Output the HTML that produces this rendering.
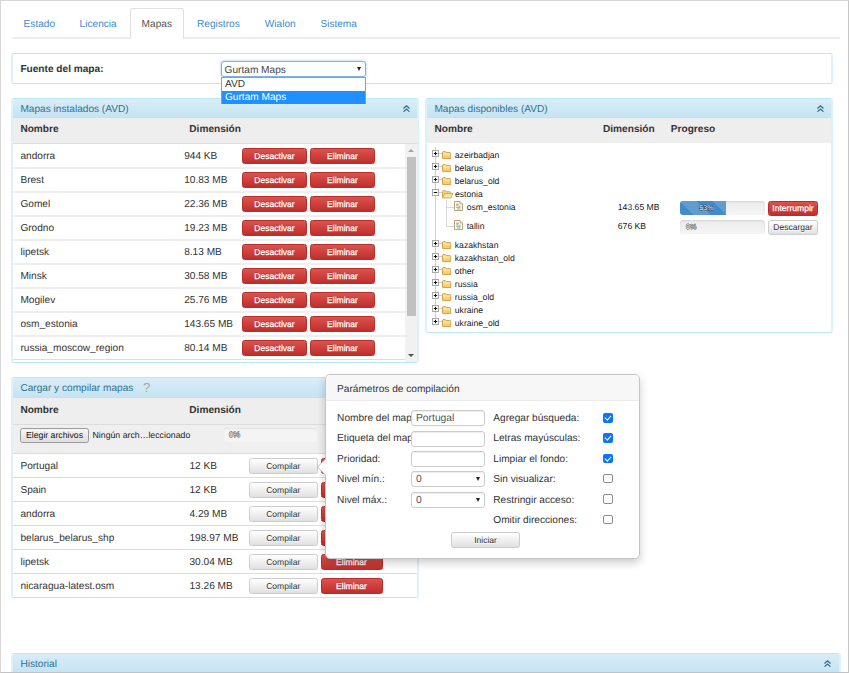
<!DOCTYPE html>
<html lang="es">
<head>
<meta charset="utf-8">
<title>Mapas</title>
<style>
*{box-sizing:border-box;}
html,body{margin:0;padding:0;}
body{width:849px;height:673px;overflow:hidden;background:#fff;position:relative;font-family:"Liberation Sans",Arial,sans-serif;font-size:10.12px;color:#333;line-height:1.2;text-rendering:geometricPrecision;}
.abs{position:absolute;}
#frame{position:absolute;left:0;top:0;width:849px;height:673px;border:1px solid #d6d6d6;border-right-color:#c6c6c6;border-bottom-color:#c2c2c2;z-index:50;pointer-events:none;}
/* tabs */
#tabline{position:absolute;left:12px;top:37px;width:828px;height:2px;background:#eee;}
.tab{position:absolute;top:10px;height:30px;line-height:30px;color:#428bca;white-space:nowrap;}
#tabact{position:absolute;left:130px;top:8px;width:54px;height:31px;border:1px solid #e0e0e0;border-bottom:1px solid #fff;border-radius:3px 3px 0 0;background:#fff;}
/* source box */
#src{position:absolute;left:11px;top:53px;width:822px;height:31px;border:1px solid #bce8f1;border-left:2px solid #dcf2f8;border-right:2px solid #dcf2f8;border-radius:3px;background:#fff;}
#src b{position:absolute;left:7.4px;top:0.5px;line-height:29px;}
#sel{position:absolute;left:221px;top:61px;width:145px;height:16px;border:1px solid #7ab5e6;border-radius:3px;background:#fff;box-shadow:0 0 3px rgba(102,175,233,.7);line-height:17px;padding-left:2.6px;color:#444;overflow:hidden;}
.arr{position:absolute;width:0;height:0;border-left:2.6px solid transparent;border-right:2.6px solid transparent;border-top:4.2px solid #222;}
#dd{position:absolute;left:221px;top:77px;width:145px;height:27px;border:1px solid #8c9fb8;background:#fff;z-index:20;}
#dd div{height:13px;line-height:13px;padding-left:3px;color:#333;}
#dd div.hl{background:#1e90ff;color:#fff;}
/* panels */
.panel{position:absolute;border:1px solid #bce8f1;border-left:2px solid #dcf2f8;border-right:2px solid #dcf2f8;border-radius:3px;background:#fff;overflow:hidden;}
.ph{position:absolute;left:0;top:0;right:0;height:19px;background:linear-gradient(#d9edf7,#c6e4f3);color:#31708f;line-height:21.4px;padding-left:7.4px;}
.th{position:absolute;left:0;right:0;top:19px;height:25px;background:#eee;font-weight:bold;}
.th span{position:absolute;top:0;line-height:24px;}
.row{position:absolute;left:0;right:0;height:24px;border-top:1px solid #ddd;line-height:25px;}
.row span{position:absolute;top:0;white-space:nowrap;}
.btn{position:absolute;height:16px;line-height:14px;text-align:center;font-size:8.55px;border-radius:2.5px;border:1px solid #ccc;white-space:nowrap;}
.red{background:linear-gradient(#d9534f,#c12e2a);border-color:#b92c28;color:#fff;text-shadow:0 -1px 0 rgba(0,0,0,.2);-webkit-text-stroke:0.25px #fff;}
.def{background:linear-gradient(#fff,#e0e0e0);border-color:#ccc;color:#333;text-shadow:0 1px 0 #fff;}
.chev{position:absolute;}
.prog{position:absolute;height:14px;background:linear-gradient(#ebebeb,#f5f5f5);border-radius:3px;box-shadow:inset 0 1px 2px rgba(0,0,0,.1);overflow:hidden;}
.pt{position:absolute;font-size:7.1px;color:#fff;-webkit-text-stroke:0.9px rgba(40,40,40,.85);paint-order:stroke fill;line-height:14px;}
.fill{position:absolute;left:0;top:0;height:100%;background-color:#428bca;background-image:linear-gradient(45deg,rgba(255,255,255,.15) 25%,transparent 25%,transparent 50%,rgba(255,255,255,.15) 50%,rgba(255,255,255,.15) 75%,transparent 75%,transparent);background-size:33px 33px;}
/* tree */
.tree{font-size:8.65px;color:#222;}
.tree span{position:absolute;white-space:nowrap;line-height:12px;}
/* popover */
#pop{position:absolute;left:325px;top:374px;width:314.5px;height:185px;background:#fff;border:1px solid #c4c4c4;border-radius:5px;box-shadow:0 4px 8px rgba(0,0,0,.2);z-index:30;}
#pop .pt2{position:absolute;left:0;top:0;right:0;height:26px;background:#f7f7f7;border-bottom:1px solid #ebebeb;border-radius:4px 4px 0 0;line-height:29px;padding-left:11.1px;}
#pop .lb{position:absolute;white-space:nowrap;overflow:hidden;line-height:16px;height:16px;}
#pop .in{position:absolute;left:85px;width:74px;height:16px;border:1px solid #ccc;border-radius:3px;background:#fff;font-size:10.3px;line-height:14px;padding-left:4px;padding-top:1.4px;color:#555;box-shadow:inset 0 1px 1px rgba(0,0,0,.075);}
.cb{position:absolute;left:277px;width:9.6px;height:9.6px;border-radius:2px;}
.cb.on{background:#0b74fb;}
.cb.off{border:1px solid #8c8c8c;background:#fff;}

#sb{position:absolute;right:0;top:45px;width:11.8px;height:218px;background:#f1f1f1;}
#sb .thumb{position:absolute;left:1.7px;top:12.9px;width:8.9px;height:159.2px;background:#c1c1c1;}
#sb .up{position:absolute;left:3.1px;top:5px;width:0;height:0;border-left:3px solid transparent;border-right:3px solid transparent;border-bottom:3.4px solid #a3a3a3;}
#sb .dn{position:absolute;left:3.1px;top:209.8px;width:0;height:0;border-left:3px solid transparent;border-right:3px solid transparent;border-top:3.4px solid #505050;}
#filerow{position:absolute;left:0;right:0;top:46px;height:29px;background:#efefef;border-top:1px solid #ddd;}
#fbtn{position:absolute;left:7px;top:3px;width:69px;height:15px;border:1px solid #9a9a9a;border-radius:2.5px;background:linear-gradient(#f6f6f6,#dedede);color:#111;text-align:center;line-height:13.4px;font-size:8.7px;}
#ftxt{position:absolute;left:79.5px;top:3px;line-height:15.4px;font-size:8.75px;color:#222;white-space:nowrap;}
#parrow{position:absolute;left:-8.5px;top:83.5px;width:0;height:0;border-top:8.5px solid transparent;border-bottom:8.5px solid transparent;border-right:8.5px solid #fff;filter:drop-shadow(-1px 0 0 #bbb);}
.cb.on::after{content:"";position:absolute;left:2.9px;top:0.9px;width:2.5px;height:5px;border:solid #fff;border-width:0 1.7px 1.7px 0;transform:rotate(42deg);}

#p3 .ph{height:20px;line-height:22px;}
#p3 .th{top:20px;height:26px;}
#p3 .th span{line-height:26px;}
.ph{border-bottom:1px solid #bfe3f1;}

.r2{border-top:2px solid #eee;}
.r2 span{top:-1px;}
.r2 .btn{margin-top:-1px;}
</style>
</head>
<body>
<!-- tabs -->
<div id="tabline"></div>
<div id="tabact"></div>
<div class="tab" style="left:23.6px">Estado</div>
<div class="tab" style="left:79.6px">Licencia</div>
<div class="tab" style="left:141.6px;color:#555">Mapas</div>
<div class="tab" style="left:197px">Registros</div>
<div class="tab" style="left:264.8px">Wialon</div>
<div class="tab" style="left:320.4px">Sistema</div>

<!-- source -->
<div id="src"><b>Fuente del mapa:</b></div>
<div id="sel">Gurtam Maps<i class="arr" style="right:4.1px;top:4.6px;border-left-width:2.5px;border-right-width:2.5px;border-top-width:4.2px"></i></div>
<div id="dd"><div>AVD</div><div class="hl">Gurtam Maps</div></div>

<!-- panel 1 -->
<div class="panel" id="p1" style="left:11px;top:98px;width:408px;height:265px;">
 <div class="ph">Mapas instalados (AVD)<svg class="chev" style="right:7.3px;top:5.7px" width="7" height="7" viewBox="0 0 7 7"><path d="M0.5 3.5 L3.5 0.9 L6.5 3.5 M0.5 6.6 L3.5 4 L6.5 6.6" fill="none" stroke="#2f6d8c" stroke-width="1.25"/></svg></div>
 <div class="th"><span style="left:7.4px">Nombre</span><span style="left:176.3px">Dimensión</span></div>
<div class="row first" style="top:44px"><span style="left:7.4px">andorra</span><span style="left:171.2px">944 KB</span><div class="btn red" style="left:229px;top:4px;width:65px">Desactivar</div><div class="btn red" style="left:297px;top:4px;width:65px">Eliminar</div></div>
<div class="row r2" style="top:68px"><span style="left:7.4px">Brest</span><span style="left:171.2px">10.83 MB</span><div class="btn red" style="left:229px;top:4px;width:65px">Desactivar</div><div class="btn red" style="left:297px;top:4px;width:65px">Eliminar</div></div>
<div class="row r2" style="top:92px"><span style="left:7.4px">Gomel</span><span style="left:171.2px">22.36 MB</span><div class="btn red" style="left:229px;top:4px;width:65px">Desactivar</div><div class="btn red" style="left:297px;top:4px;width:65px">Eliminar</div></div>
<div class="row r2" style="top:116px"><span style="left:7.4px">Grodno</span><span style="left:171.2px">19.23 MB</span><div class="btn red" style="left:229px;top:4px;width:65px">Desactivar</div><div class="btn red" style="left:297px;top:4px;width:65px">Eliminar</div></div>
<div class="row r2" style="top:140px"><span style="left:7.4px">lipetsk</span><span style="left:171.2px">8.13 MB</span><div class="btn red" style="left:229px;top:4px;width:65px">Desactivar</div><div class="btn red" style="left:297px;top:4px;width:65px">Eliminar</div></div>
<div class="row r2" style="top:164px"><span style="left:7.4px">Minsk</span><span style="left:171.2px">30.58 MB</span><div class="btn red" style="left:229px;top:4px;width:65px">Desactivar</div><div class="btn red" style="left:297px;top:4px;width:65px">Eliminar</div></div>
<div class="row r2" style="top:188px"><span style="left:7.4px">Mogilev</span><span style="left:171.2px">25.76 MB</span><div class="btn red" style="left:229px;top:4px;width:65px">Desactivar</div><div class="btn red" style="left:297px;top:4px;width:65px">Eliminar</div></div>
<div class="row r2" style="top:212px"><span style="left:7.4px">osm_estonia</span><span style="left:171.2px">143.65 MB</span><div class="btn red" style="left:229px;top:4px;width:65px">Desactivar</div><div class="btn red" style="left:297px;top:4px;width:65px">Eliminar</div></div>
<div class="row r2" style="top:236px"><span style="left:7.4px">russia_moscow_region</span><span style="left:171.2px">80.14 MB</span><div class="btn red" style="left:229px;top:4px;width:65px">Desactivar</div><div class="btn red" style="left:297px;top:4px;width:65px">Eliminar</div></div>

 <div class="abs" style="left:0;right:0;top:260px;height:1px;background:#ddd"></div>
 <div id="sb"><i class="up"></i><i class="thumb"></i><i class="dn"></i></div>
</div>

<!-- panel 2 -->
<div class="panel" id="p2" style="left:425px;top:98px;width:408px;height:235px;">
 <div class="ph">Mapas disponibles (AVD)<svg class="chev" style="right:7px;top:5.7px" width="7" height="7" viewBox="0 0 7 7"><path d="M0.5 3.5 L3.5 0.9 L6.5 3.5 M0.5 6.6 L3.5 4 L6.5 6.6" fill="none" stroke="#2f6d8c" stroke-width="1.25"/></svg></div>
 <div class="th"><span style="left:7.5px">Nombre</span><span style="left:176px">Dimensión</span><span style="left:243.8px">Progreso</span></div>
 <div class="tree"><svg width="0" height="0" style="position:absolute"><defs><linearGradient id="fg" x1="0" y1="0" x2="0" y2="1"><stop offset="0" stop-color="#fde79e"/><stop offset="1" stop-color="#f4c55e"/></linearGradient></defs></svg><div class="abs" style="left:8px;top:48px;width:1px;height:175px;background:#d0d0d0"></div><div class="abs" style="left:11px;top:54.1px;width:4px;height:1px;background:#d0d0d0"></div><svg class="abs" style="left:5px;top:51.1px" width="7" height="7" viewBox="0 0 7 7"><rect x="0.5" y="0.5" width="6" height="6" fill="#fff" stroke="#a0a0a0" stroke-width="0.9"/><path d="M1.8 3.5h3.4M3.5 1.8v3.4" stroke="#111" stroke-width="1" fill="none"/></svg><svg class="abs" style="left:14.5px;top:51.6px" width="9.3" height="8.2" viewBox="0 0 10 8.4" preserveAspectRatio="none"><path d="M0.5 2 Q0.5 0.6 1.6 0.6 L3.6 0.6 L4.5 1.7 L8.6 1.7 Q9.5 1.7 9.5 2.6 L9.5 7 Q9.5 7.9 8.6 7.9 L1.4 7.9 Q0.5 7.9 0.5 7 Z" fill="url(#fg)" stroke="#c98f2f" stroke-width="0.9"/><path d="M1.2 3.1h7.6" stroke="#fdf0bd" stroke-width="0.7"/></svg><span style="left:27.8px;top:49.6px">azeirbadjan</span><div class="abs" style="left:11px;top:67.1px;width:4px;height:1px;background:#d0d0d0"></div><svg class="abs" style="left:5px;top:64.1px" width="7" height="7" viewBox="0 0 7 7"><rect x="0.5" y="0.5" width="6" height="6" fill="#fff" stroke="#a0a0a0" stroke-width="0.9"/><path d="M1.8 3.5h3.4M3.5 1.8v3.4" stroke="#111" stroke-width="1" fill="none"/></svg><svg class="abs" style="left:14.5px;top:64.6px" width="9.3" height="8.2" viewBox="0 0 10 8.4" preserveAspectRatio="none"><path d="M0.5 2 Q0.5 0.6 1.6 0.6 L3.6 0.6 L4.5 1.7 L8.6 1.7 Q9.5 1.7 9.5 2.6 L9.5 7 Q9.5 7.9 8.6 7.9 L1.4 7.9 Q0.5 7.9 0.5 7 Z" fill="url(#fg)" stroke="#c98f2f" stroke-width="0.9"/><path d="M1.2 3.1h7.6" stroke="#fdf0bd" stroke-width="0.7"/></svg><span style="left:27.8px;top:62.6px">belarus</span><div class="abs" style="left:11px;top:80.1px;width:4px;height:1px;background:#d0d0d0"></div><svg class="abs" style="left:5px;top:77.1px" width="7" height="7" viewBox="0 0 7 7"><rect x="0.5" y="0.5" width="6" height="6" fill="#fff" stroke="#a0a0a0" stroke-width="0.9"/><path d="M1.8 3.5h3.4M3.5 1.8v3.4" stroke="#111" stroke-width="1" fill="none"/></svg><svg class="abs" style="left:14.5px;top:77.6px" width="9.3" height="8.2" viewBox="0 0 10 8.4" preserveAspectRatio="none"><path d="M0.5 2 Q0.5 0.6 1.6 0.6 L3.6 0.6 L4.5 1.7 L8.6 1.7 Q9.5 1.7 9.5 2.6 L9.5 7 Q9.5 7.9 8.6 7.9 L1.4 7.9 Q0.5 7.9 0.5 7 Z" fill="url(#fg)" stroke="#c98f2f" stroke-width="0.9"/><path d="M1.2 3.1h7.6" stroke="#fdf0bd" stroke-width="0.7"/></svg><span style="left:27.8px;top:75.6px">belarus_old</span><div class="abs" style="left:11px;top:93.1px;width:4px;height:1px;background:#d0d0d0"></div><svg class="abs" style="left:5px;top:90.1px" width="7" height="7" viewBox="0 0 7 7"><rect x="0.5" y="0.5" width="6" height="6" fill="#fff" stroke="#a0a0a0" stroke-width="0.9"/><path d="M1.8 3.5h3.4" stroke="#111" stroke-width="1" fill="none"/></svg><svg class="abs" style="left:14.6px;top:91.2px" width="11.5" height="8.6" viewBox="0 0 11.5 8.6"><path d="M0.5 7.6 L0.5 1.6 Q0.5 0.6 1.5 0.6 L3.4 0.6 L4.3 1.7 L7.8 1.7 Q8.6 1.7 8.6 2.6 L8.6 3.4" fill="#f6d27a" stroke="#cf9a3a" stroke-width="0.8"/><path d="M0.6 8 L2.6 3.6 L11 3.6 L8.8 8 Z" fill="#fbe6a2" stroke="#cf9a3a" stroke-width="0.8" stroke-linejoin="round"/></svg><span style="left:28px;top:88.6px">estonia</span><div class="abs" style="left:11px;top:144.1px;width:4px;height:1px;background:#d0d0d0"></div><svg class="abs" style="left:5px;top:141.1px" width="7" height="7" viewBox="0 0 7 7"><rect x="0.5" y="0.5" width="6" height="6" fill="#fff" stroke="#a0a0a0" stroke-width="0.9"/><path d="M1.8 3.5h3.4M3.5 1.8v3.4" stroke="#111" stroke-width="1" fill="none"/></svg><svg class="abs" style="left:14.5px;top:141.6px" width="9.3" height="8.2" viewBox="0 0 10 8.4" preserveAspectRatio="none"><path d="M0.5 2 Q0.5 0.6 1.6 0.6 L3.6 0.6 L4.5 1.7 L8.6 1.7 Q9.5 1.7 9.5 2.6 L9.5 7 Q9.5 7.9 8.6 7.9 L1.4 7.9 Q0.5 7.9 0.5 7 Z" fill="url(#fg)" stroke="#c98f2f" stroke-width="0.9"/><path d="M1.2 3.1h7.6" stroke="#fdf0bd" stroke-width="0.7"/></svg><span style="left:27.8px;top:139.6px">kazakhstan</span><div class="abs" style="left:11px;top:157.1px;width:4px;height:1px;background:#d0d0d0"></div><svg class="abs" style="left:5px;top:154.1px" width="7" height="7" viewBox="0 0 7 7"><rect x="0.5" y="0.5" width="6" height="6" fill="#fff" stroke="#a0a0a0" stroke-width="0.9"/><path d="M1.8 3.5h3.4M3.5 1.8v3.4" stroke="#111" stroke-width="1" fill="none"/></svg><svg class="abs" style="left:14.5px;top:154.6px" width="9.3" height="8.2" viewBox="0 0 10 8.4" preserveAspectRatio="none"><path d="M0.5 2 Q0.5 0.6 1.6 0.6 L3.6 0.6 L4.5 1.7 L8.6 1.7 Q9.5 1.7 9.5 2.6 L9.5 7 Q9.5 7.9 8.6 7.9 L1.4 7.9 Q0.5 7.9 0.5 7 Z" fill="url(#fg)" stroke="#c98f2f" stroke-width="0.9"/><path d="M1.2 3.1h7.6" stroke="#fdf0bd" stroke-width="0.7"/></svg><span style="left:27.8px;top:152.6px">kazakhstan_old</span><div class="abs" style="left:11px;top:170.1px;width:4px;height:1px;background:#d0d0d0"></div><svg class="abs" style="left:5px;top:167.1px" width="7" height="7" viewBox="0 0 7 7"><rect x="0.5" y="0.5" width="6" height="6" fill="#fff" stroke="#a0a0a0" stroke-width="0.9"/><path d="M1.8 3.5h3.4M3.5 1.8v3.4" stroke="#111" stroke-width="1" fill="none"/></svg><svg class="abs" style="left:14.5px;top:167.6px" width="9.3" height="8.2" viewBox="0 0 10 8.4" preserveAspectRatio="none"><path d="M0.5 2 Q0.5 0.6 1.6 0.6 L3.6 0.6 L4.5 1.7 L8.6 1.7 Q9.5 1.7 9.5 2.6 L9.5 7 Q9.5 7.9 8.6 7.9 L1.4 7.9 Q0.5 7.9 0.5 7 Z" fill="url(#fg)" stroke="#c98f2f" stroke-width="0.9"/><path d="M1.2 3.1h7.6" stroke="#fdf0bd" stroke-width="0.7"/></svg><span style="left:27.8px;top:165.6px">other</span><div class="abs" style="left:11px;top:183.1px;width:4px;height:1px;background:#d0d0d0"></div><svg class="abs" style="left:5px;top:180.1px" width="7" height="7" viewBox="0 0 7 7"><rect x="0.5" y="0.5" width="6" height="6" fill="#fff" stroke="#a0a0a0" stroke-width="0.9"/><path d="M1.8 3.5h3.4M3.5 1.8v3.4" stroke="#111" stroke-width="1" fill="none"/></svg><svg class="abs" style="left:14.5px;top:180.6px" width="9.3" height="8.2" viewBox="0 0 10 8.4" preserveAspectRatio="none"><path d="M0.5 2 Q0.5 0.6 1.6 0.6 L3.6 0.6 L4.5 1.7 L8.6 1.7 Q9.5 1.7 9.5 2.6 L9.5 7 Q9.5 7.9 8.6 7.9 L1.4 7.9 Q0.5 7.9 0.5 7 Z" fill="url(#fg)" stroke="#c98f2f" stroke-width="0.9"/><path d="M1.2 3.1h7.6" stroke="#fdf0bd" stroke-width="0.7"/></svg><span style="left:27.8px;top:178.6px">russia</span><div class="abs" style="left:11px;top:196.1px;width:4px;height:1px;background:#d0d0d0"></div><svg class="abs" style="left:5px;top:193.1px" width="7" height="7" viewBox="0 0 7 7"><rect x="0.5" y="0.5" width="6" height="6" fill="#fff" stroke="#a0a0a0" stroke-width="0.9"/><path d="M1.8 3.5h3.4M3.5 1.8v3.4" stroke="#111" stroke-width="1" fill="none"/></svg><svg class="abs" style="left:14.5px;top:193.6px" width="9.3" height="8.2" viewBox="0 0 10 8.4" preserveAspectRatio="none"><path d="M0.5 2 Q0.5 0.6 1.6 0.6 L3.6 0.6 L4.5 1.7 L8.6 1.7 Q9.5 1.7 9.5 2.6 L9.5 7 Q9.5 7.9 8.6 7.9 L1.4 7.9 Q0.5 7.9 0.5 7 Z" fill="url(#fg)" stroke="#c98f2f" stroke-width="0.9"/><path d="M1.2 3.1h7.6" stroke="#fdf0bd" stroke-width="0.7"/></svg><span style="left:27.8px;top:191.6px">russia_old</span><div class="abs" style="left:11px;top:209.1px;width:4px;height:1px;background:#d0d0d0"></div><svg class="abs" style="left:5px;top:206.1px" width="7" height="7" viewBox="0 0 7 7"><rect x="0.5" y="0.5" width="6" height="6" fill="#fff" stroke="#a0a0a0" stroke-width="0.9"/><path d="M1.8 3.5h3.4M3.5 1.8v3.4" stroke="#111" stroke-width="1" fill="none"/></svg><svg class="abs" style="left:14.5px;top:206.6px" width="9.3" height="8.2" viewBox="0 0 10 8.4" preserveAspectRatio="none"><path d="M0.5 2 Q0.5 0.6 1.6 0.6 L3.6 0.6 L4.5 1.7 L8.6 1.7 Q9.5 1.7 9.5 2.6 L9.5 7 Q9.5 7.9 8.6 7.9 L1.4 7.9 Q0.5 7.9 0.5 7 Z" fill="url(#fg)" stroke="#c98f2f" stroke-width="0.9"/><path d="M1.2 3.1h7.6" stroke="#fdf0bd" stroke-width="0.7"/></svg><span style="left:27.8px;top:204.6px">ukraine</span><div class="abs" style="left:11px;top:222.1px;width:4px;height:1px;background:#d0d0d0"></div><svg class="abs" style="left:5px;top:219.1px" width="7" height="7" viewBox="0 0 7 7"><rect x="0.5" y="0.5" width="6" height="6" fill="#fff" stroke="#a0a0a0" stroke-width="0.9"/><path d="M1.8 3.5h3.4M3.5 1.8v3.4" stroke="#111" stroke-width="1" fill="none"/></svg><svg class="abs" style="left:14.5px;top:219.6px" width="9.3" height="8.2" viewBox="0 0 10 8.4" preserveAspectRatio="none"><path d="M0.5 2 Q0.5 0.6 1.6 0.6 L3.6 0.6 L4.5 1.7 L8.6 1.7 Q9.5 1.7 9.5 2.6 L9.5 7 Q9.5 7.9 8.6 7.9 L1.4 7.9 Q0.5 7.9 0.5 7 Z" fill="url(#fg)" stroke="#c98f2f" stroke-width="0.9"/><path d="M1.2 3.1h7.6" stroke="#fdf0bd" stroke-width="0.7"/></svg><span style="left:27.8px;top:217.6px">ukraine_old</span><div class="abs" style="left:19px;top:101px;width:1px;height:27px;background:#d9d9d9"></div><div class="abs" style="left:19px;top:107.5px;width:8px;height:1px;background:#d9d9d9"></div><svg class="abs" style="left:27.2px;top:102.2px" width="9" height="10" viewBox="0 0 9 10"><path d="M0.5 0.5 L6 0.5 L8.5 3 L8.5 9.5 L0.5 9.5 Z" fill="#fffef6" stroke="#a89d6a" stroke-width="0.9"/><path d="M6 0.5 L6 3 L8.5 3" fill="#efeedc" stroke="#a89d6a" stroke-width="0.7"/><path d="M2.2 3.2h2.6M2.2 4.8h1.6" stroke="#d95f5f" stroke-width="0.9"/><path d="M4.2 5.2h2.4M2.2 6.6h4.4M3 8h3.4" stroke="#6aa58c" stroke-width="0.8"/></svg><span style="left:39.7px;top:101.5px">osm_estonia</span><span style="left:190.8px;top:101.5px">143.65 MB</span><div class="abs" style="left:19px;top:126.5px;width:8px;height:1px;background:#d9d9d9"></div><svg class="abs" style="left:27.2px;top:121.2px" width="9" height="10" viewBox="0 0 9 10"><path d="M0.5 0.5 L6 0.5 L8.5 3 L8.5 9.5 L0.5 9.5 Z" fill="#fffef6" stroke="#a89d6a" stroke-width="0.9"/><path d="M6 0.5 L6 3 L8.5 3" fill="#efeedc" stroke="#a89d6a" stroke-width="0.7"/><path d="M2.2 3.2h2.6M2.2 4.8h1.6" stroke="#d95f5f" stroke-width="0.9"/><path d="M4.2 5.2h2.4M2.2 6.6h4.4M3 8h3.4" stroke="#6aa58c" stroke-width="0.8"/></svg><span style="left:39.7px;top:120.5px">tallin</span><span style="left:190.8px;top:120.5px">676 KB</span></div>
 <div class="prog" style="left:253px;top:102.3px;width:85px"><div class="fill" style="width:45.7px"></div><span class="pt" style="left:19.3px">53%</span></div>
 <div class="btn red" style="left:341px;top:102px;width:50px;height:15px;line-height:13px">Interrumpir</div>
 <div class="prog" style="left:253px;top:121.3px;width:85px"><span class="pt" style="left:6px">0%</span></div>
 <div class="btn def" style="left:341px;top:121px;width:50px;height:15px;line-height:13px">Descargar</div>
</div>

<!-- panel 3 -->
<div class="panel" id="p3" style="left:11px;top:377px;width:408px;height:221px;">
 <div class="ph">Cargar y compilar mapas<span style="position:absolute;left:130px;top:0;font-size:13px;color:#9aa8b0;line-height:20px">?</span></div>
 <div class="th"><span style="left:7.4px">Nombre</span><span style="left:176.3px">Dimensión</span></div>
 <div id="filerow">
  <div id="fbtn">Elegir archivos</div><span id="ftxt">Ningún arch…leccionado</span>
  <div class="prog" style="left:210.5px;top:3px;width:93px;height:14.4px;background:#f4f4f4;box-shadow:inset 0 1px 1px rgba(0,0,0,.07)"><span class="pt" style="left:5.6px;line-height:14.4px;font-size:7.6px">0%</span></div>
 </div>
<div class="row" style="top:75px"><span style="left:7.4px">Portugal</span><span style="left:176.5px">12 KB</span><div class="btn def" style="left:236px;top:4px;width:68.5px">Compilar</div><div class="btn red" style="left:307.5px;top:4px;width:62px">Eliminar</div></div>
<div class="row" style="top:99px"><span style="left:7.4px">Spain</span><span style="left:176.5px">12 KB</span><div class="btn def" style="left:236px;top:4px;width:68.5px">Compilar</div><div class="btn red" style="left:307.5px;top:4px;width:62px">Eliminar</div></div>
<div class="row" style="top:123px"><span style="left:7.4px">andorra</span><span style="left:176.5px">4.29 MB</span><div class="btn def" style="left:236px;top:4px;width:68.5px">Compilar</div><div class="btn red" style="left:307.5px;top:4px;width:62px">Eliminar</div></div>
<div class="row" style="top:147px"><span style="left:7.4px">belarus_belarus_shp</span><span style="left:176.5px">198.97 MB</span><div class="btn def" style="left:236px;top:4px;width:68.5px">Compilar</div><div class="btn red" style="left:307.5px;top:4px;width:62px">Eliminar</div></div>
<div class="row" style="top:171px"><span style="left:7.4px">lipetsk</span><span style="left:176.5px">30.04 MB</span><div class="btn def" style="left:236px;top:4px;width:68.5px">Compilar</div><div class="btn red" style="left:307.5px;top:4px;width:62px">Eliminar</div></div>
<div class="row" style="top:195px"><span style="left:7.4px">nicaragua-latest.osm</span><span style="left:176.5px">13.26 MB</span><div class="btn def" style="left:236px;top:4px;width:68.5px">Compilar</div><div class="btn red" style="left:307.5px;top:4px;width:62px">Eliminar</div></div>

</div>

<!-- historial -->
<div class="panel" id="p4" style="left:11px;top:653px;width:830px;height:40px;">
 <div class="ph">Historial<svg class="chev" style="right:8px;top:5.7px" width="7" height="7" viewBox="0 0 7 7"><path d="M0.5 3.5 L3.5 0.9 L6.5 3.5 M0.5 6.6 L3.5 4 L6.5 6.6" fill="none" stroke="#2f6d8c" stroke-width="1.25"/></svg></div>
</div>

<div id="pop"><div class="pt2">Parámetros de compilación</div>
<i id="parrow"></i>
<div class="lb" style="left:11.1px;top:36px;width:73.6px">Nombre del mapa:</div><div class="in" style="top:35px">Portugal</div>
<div class="lb" style="left:11.1px;top:56.4px;width:73.6px">Etiqueta del mapa:</div><div class="in" style="top:56px"></div>
<div class="lb" style="left:11.1px;top:76.8px;width:73.6px">Prioridad:</div><div class="in" style="top:76px"></div>
<div class="lb" style="left:11.1px;top:97.2px;width:73.6px">Nivel mín.:</div><div class="in" style="top:96px">0<i class="arr" style="right:4.5px;top:5.2px"></i></div>
<div class="lb" style="left:11.1px;top:117.6px;width:73.6px">Nivel máx.:</div><div class="in" style="top:117px">0<i class="arr" style="right:4.5px;top:5.2px"></i></div>
<div class="lb" style="left:167.3px;top:36px">Agregar búsqueda:</div><i class="cb on" style="top:38px"></i>
<div class="lb" style="left:167.3px;top:56.4px">Letras mayúsculas:</div><i class="cb on" style="top:58.3px"></i>
<div class="lb" style="left:167.3px;top:76.8px">Limpiar el fondo:</div><i class="cb on" style="top:78.7px"></i>
<div class="lb" style="left:167.3px;top:97.2px">Sin visualizar:</div><i class="cb off" style="top:98.9px"></i>
<div class="lb" style="left:167.3px;top:117.6px">Restringir acceso:</div><i class="cb off" style="top:119.4px"></i>
<div class="lb" style="left:167.3px;top:138px">Omitir direcciones:</div><i class="cb off" style="top:139.5px"></i>
<div class="btn def" style="left:125.2px;top:157.3px;width:68.7px;height:16px">Iniciar</div>
</div>
<div id="frame"></div>
</body>
</html>
